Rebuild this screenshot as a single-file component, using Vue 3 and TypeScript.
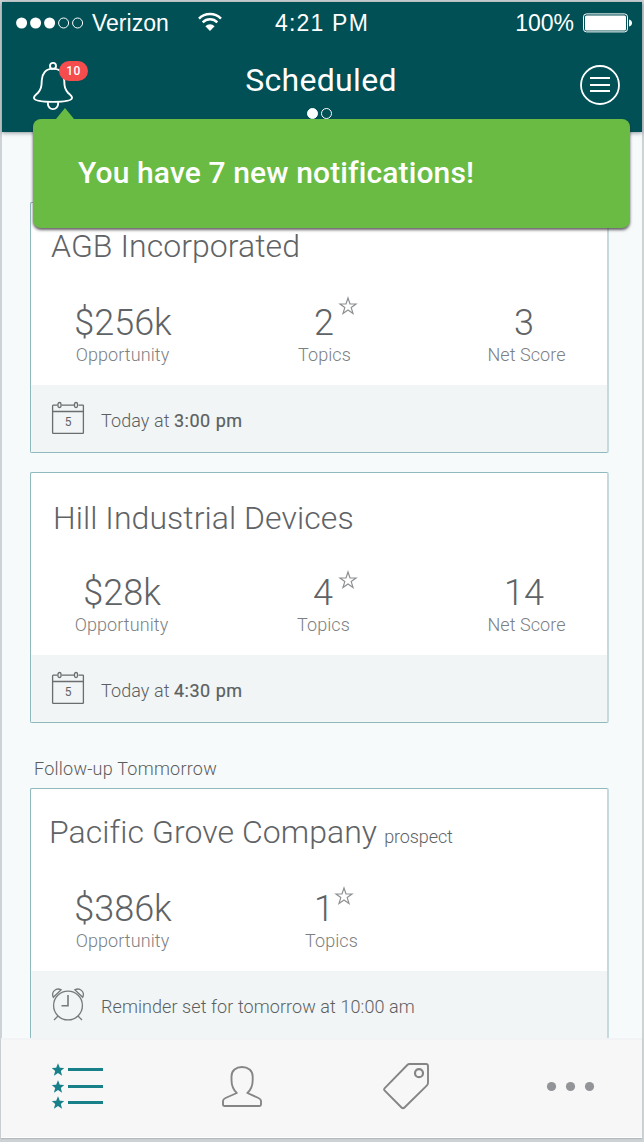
<script setup lang="ts">
import { ref } from 'vue'

interface Stat {
  key: string
  value: string
  label: string
  star?: boolean
}

interface Account {
  id: string
  name: string
  tag?: string
  stats: Stat[]
  icon: 'calendar' | 'alarm'
  when: string
  time?: string
}

const notificationCount = ref(10)

const today: Account[] = [
  {
    id: 'agb',
    name: 'AGB Incorporated',
    stats: [
      { key: 'opp', value: '$256k', label: 'Opportunity' },
      { key: 'topics', value: '2', label: 'Topics', star: true },
      { key: 'score', value: '3', label: 'Net Score' },
    ],
    icon: 'calendar',
    when: 'Today at',
    time: '3:00 pm',
  },
  {
    id: 'hill',
    name: 'Hill Industrial Devices',
    stats: [
      { key: 'opp', value: '$28k', label: 'Opportunity' },
      { key: 'topics', value: '4', label: 'Topics', star: true },
      { key: 'score', value: '14', label: 'Net Score' },
    ],
    icon: 'calendar',
    when: 'Today at',
    time: '4:30 pm',
  },
]

const tomorrow: Account[] = [
  {
    id: 'pacific',
    name: 'Pacific Grove Company',
    tag: 'prospect',
    stats: [
      { key: 'opp', value: '$386k', label: 'Opportunity' },
      { key: 'topics', value: '1', label: 'Topics', star: true },
    ],
    icon: 'alarm',
    when: 'Reminder set for tomorrow at 10:00 am',
  },
]

const sections = [
  { id: 'today', title: '', accounts: today },
  { id: 'tomorrow', title: 'Follow-up Tommorrow', accounts: tomorrow },
]
</script>

<template>
  <div class="frame">
    <div class="screen">
      <header class="header">
        <div class="status">
          <div class="carrier">
            <svg class="signal" width="68" height="12" viewBox="0 0 68 12">
              <circle cx="5.6" cy="6" r="5.5" fill="#fff" />
              <circle cx="19.6" cy="6" r="5.5" fill="#fff" />
              <circle cx="33.6" cy="6" r="5.5" fill="#fff" />
              <circle cx="47.6" cy="6" r="5" fill="none" stroke="#fff" />
              <circle cx="61.6" cy="6" r="5" fill="none" stroke="#fff" />
            </svg>
            <span class="network">Verizon</span>
            <svg class="wifi" width="24" height="18" viewBox="0 0 24 18">
              <path d="M1 5.6a15.6 15.6 0 0 1 22 0M4.7 9.4a10.3 10.3 0 0 1 14.6 0" fill="none" stroke="#fff" stroke-width="2.5" />
              <path d="M7.4 13.2a6.6 6.6 0 0 1 9.2 0L12 18z" fill="#fff" />
            </svg>
          </div>
          <span class="clock">4:21 PM</span>
          <div class="power">
            <span>100%</span>
            <svg width="49" height="20" viewBox="0 0 49 20">
              <rect x=".5" y=".9" width="44" height="18" rx="3" fill="none" stroke="#fff" />
              <rect x="2" y="2.4" width="41" height="15" rx="1.5" fill="#fff" />
              <path d="M46 6.4q3 .8 3 3.5t-3 3.5z" fill="#fff" />
            </svg>
          </div>
        </div>

        <div class="bar">
          <div class="bell">
            <svg width="40" height="48" viewBox="0 0 40 48" fill="none" stroke="#fff" stroke-width="1.9">
              <circle cx="20" cy="3.9" r="3" />
              <path d="M20 6.6C12.500 6.600 9 12 8.800 18C8.600 25 8 27.500 4.800 31C2.500 33.200 1 34 1 35.800C1 38.500 9 39.900 20 39.900S39 38.500 39 35.800C39 34 37.500 33.200 35.200 31C32 27.500 31.400 25 31.200 18C31 12 27.500 6.600 20 6.600Z" />
              <path d="M14.900 40.300V42A5.100 5.100 0 0 0 25.100 42V40.300" />
            </svg>
            <span class="count">{{ notificationCount }}</span>
          </div>
          <div class="heading">
            <h1>Scheduled</h1>
            <div class="pager"><i class="dot on"></i><i class="dot"></i></div>
          </div>
          <svg class="menu" width="40" height="40" viewBox="0 0 40 40" fill="none" stroke="#fff" stroke-width="1.8">
            <circle cx="20" cy="20" r="19" />
            <path d="M10 13H30M10 20H30M10 26H30" stroke-width="2" />
          </svg>
        </div>

        <div class="toast">You have 7 new notifications!</div>
      </header>

      <main class="content">
        <section v-for="s in sections" :key="s.id" class="section">
          <h2 v-if="s.title" class="section-title">{{ s.title }}</h2>
          <article v-for="a in s.accounts" :key="a.id" class="card" :class="a.id">
            <div class="body">
              <h3 class="name">{{ a.name }}<small v-if="a.tag">{{ a.tag }}</small></h3>
              <div class="stats">
                <div v-for="st in a.stats" :key="st.key" class="stat" :class="st.key">
                  <span class="value">{{ st.value }}</span>
                  <span class="label">{{ st.label }}</span>
                  <svg v-if="st.star" class="star" width="20" height="20" viewBox="0 0 20 20">
                    <path d="M10 2L12 8H18L13.200 11.600L15 17.500L10 13.900L5 17.500L6.800 11.600L2 8H8Z" fill="none" stroke="#8d9092" stroke-width="1.200" />
                  </svg>
                </div>
              </div>
            </div>
            <footer class="foot">
              <svg v-if="a.icon === 'calendar'" width="34" height="34" viewBox="0 0 34 34" fill="none" stroke="#6b6d6e" stroke-width="1.3">
                <path d="M6.500 4.200H2.200Q1.600 4.200 1.600 4.800V31.800Q1.600 32.400 2.200 32.400H31.800Q32.400 32.400 32.400 31.800V4.800Q32.400 4.200 31.800 4.200H27.500M10.500 4.200H23.500M1.600 10.500H32.400" />
                <rect x="7" y="1.500" width="3" height="5" rx="1.500" />
                <rect x="23.500" y="1.500" width="3" height="5" rx="1.500" />
                <text x="17" y="25" text-anchor="middle" class="day">5</text>
              </svg>
              <svg v-else width="34" height="34" viewBox="0 0 34 34" fill="none" stroke="#77797a" stroke-width="1.3">
                <circle cx="17" cy="18.500" r="14.400" />
                <path d="M17 8V18.700H10.500" stroke-width="1.600" />
                <path d="M7 29L3 33M27 29L31 33" />
                <path d="M2.300 10.300C-.2 5 5 .3 10.200 2.800ZM31.700 10.300C34.200 5 29 .3 23.800 2.800Z" />
              </svg>
              <span class="when">{{ a.when }} <b v-if="a.time">{{ a.time }}</b></span>
            </footer>
          </article>
        </section>
      </main>

      <nav class="tabs">
        <svg width="52" height="48" viewBox="0 0 52 48" fill="#178088">
          <g v-for="y in [8, 25, 41]" :key="y">
            <path :transform="`translate(7 ${y})`" d="M0 -6.800L1.800 -2.300L6.200 -2L2.800 .9L4.100 5.700L0 3L-4.100 5.700L-2.800 .9L-6.200 -2L-1.800 -2.300Z" />
            <rect x="17" :y="y - 2" width="35" height="3" />
          </g>
        </svg>
        <svg width="42" height="48" viewBox="0 0 42 48" fill="none" stroke="#858585" stroke-width="1.900" stroke-linejoin="round">
          <path d="M14.800 31C11 27.500 9.500 23.500 9.500 18V14.500C9.500 8.500 14 5 20 5S30.700 8.500 30.700 14.500V18C30.700 23.500 29.200 27.500 25.400 31L36.500 36Q39 37.200 39 39V42.500Q39 44 37.500 44H2.500Q1 44 1 42.500V39Q1 37.200 3.500 36Z" />
        </svg>
        <svg class="tag" width="46" height="48" viewBox="0 0 46 48" fill="none" stroke="#858585" stroke-width="1.900" stroke-linejoin="round">
          <path d="M26.500 2H43Q45 2 45 4V20.800Q45 22.300 44 23.300L21.500 45.500Q20 47 18.500 45.500L1.500 28.300Q.5 27.300 1.500 26.300L24.300 3Q25.300 2 26.500 2Z" />
          <circle cx="36" cy="11.200" r="4" stroke-width="2.200" />
        </svg>
        <svg class="more" width="46" height="48" viewBox="0 0 46 48" fill="#929497">
          <circle v-for="x in [3.500, 22.500, 41.500]" :key="x" :cx="x" cy="24.500" r="4.600" />
        </svg>
      </nav>
    </div>
  </div>
</template>

<style>
body {
  background: #cdd3d5;
}
</style>

<style scoped>
.frame {
  box-sizing: border-box;
  width: 644px;
  height: 1142px;
  padding: 2px;
  background: #cdd3d5;
  overflow: hidden;
  font-family: Roboto, 'Liberation Sans', sans-serif;
  color: #5f6366;
}
.screen {
  display: flex;
  flex-direction: column;
  width: 640px;
  height: 1136px;
  background: #f6fafb;
}
svg {
  display: block;
  flex: none;
  overflow: visible;
}
h1, h2, h3 {
  margin: 0;
  font-weight: 300;
}
.header {
  position: relative;
  z-index: 2;
  flex: none;
  height: 130px;
  background: #005056;
  color: #fff;
  box-shadow: 0 1px 4px rgba(40, 50, 55, .5);
}
.status {
  display: grid;
  grid-template-columns: 1fr auto 1fr;
  align-items: center;
  height: 42px;
  padding: 0 10px 0 14px;
  font-family: 'Liberation Sans', sans-serif;
  font-size: 23px;
}
.carrier, .power {
  display: flex;
  align-items: center;
}
.network {
  margin: 1px 0 0 8px;
}
.wifi {
  margin-left: 29px;
  margin-top: -2px;
}
.clock {
  margin-right: 4px;
  letter-spacing: 1.2px;
}
.power {
  justify-content: flex-end;
  gap: 9px;
}
.bar {
  display: flex;
  justify-content: space-between;
  align-items: flex-start;
  padding: 16px 22px 0 31px;
}
.bell {
  position: relative;
  width: 40px;
}
.bell svg {
  margin-top: 2px;
}
.count {
  position: absolute;
  left: 26px;
  top: 1px;
  width: 29px;
  height: 20px;
  border-radius: 10px;
  background: #f54d4e;
  font-size: 12px;
  font-weight: 500;
  line-height: 21px;
  letter-spacing: .4px;
  text-align: center;
}
.heading {
  display: flex;
  flex-direction: column;
  align-items: center;
  margin-left: -11px;
}
h1 {
  font-size: 32px;
  line-height: 40px;
  font-weight: 400;
  letter-spacing: .3px;
}
.pager {
  display: flex;
  gap: 3px;
  margin: 8px 3px 0 0;
}
.dot {
  box-sizing: border-box;
  width: 11px;
  height: 11px;
  border: 1px solid #fff;
  border-radius: 50%;
}
.dot.on {
  background: #fff;
}
.menu {
  margin-top: 5px;
}
.toast {
  position: absolute;
  left: 31px;
  top: 117px;
  box-sizing: border-box;
  width: 597px;
  height: 109px;
  padding-left: 45px;
  border-radius: 8px;
  background: #69bb43;
  box-shadow: 0 2px 3px rgba(50, 40, 50, .75);
  font-size: 30px;
  font-weight: 500;
  line-height: 107px;
  letter-spacing: .12px;
}
.toast::before {
  content: '';
  position: absolute;
  left: 23px;
  top: -11px;
  border: solid transparent;
  border-width: 0 9px 11px;
  border-bottom-color: #69bb43;
}
.content {
  flex: 1;
  min-height: 0;
  padding: 70px 33px 0 28px;
  overflow: hidden;
}
.section-title {
  height: 65px;
  padding-left: 4px;
  font-size: 18px;
  line-height: 91px;
  letter-spacing: .24px;
  color: #5c5c5c;
}
.card {
  box-sizing: border-box;
  height: 251px;
  border: 1px solid #8fb9bc;
  border-right: 2px solid #c5dadd;
  border-radius: 2px;
  background: #fff;
}
.card + .card {
  margin-top: 19px;
}
.body {
  box-sizing: border-box;
  height: 182px;
  padding-top: 24px;
}
.hill .body {
  padding-top: 26px;
}
.name {
  height: 38px;
  padding-left: 20px;
  font-size: 32px;
  line-height: 38px;
  letter-spacing: .06px;
  white-space: nowrap;
}
.hill .name {
  height: 36px;
  padding-left: 22px;
}
.pacific .name {
  padding-left: 18px;
}
.name small {
  margin-left: 7px;
  font-size: 18px;
  letter-spacing: -.1px;
}
.stats {
  display: flex;
  gap: 52px;
  padding: 38px 0 0 17px;
}
.stat {
  position: relative;
  display: flex;
  flex-direction: column;
  align-items: center;
  width: 150px;
}
.value {
  font-size: 36px;
  line-height: 40px;
  font-weight: 300;
}
.label {
  margin-top: 2px;
  padding-right: 1px;
  font-size: 18px;
  line-height: 20px;
  font-weight: 300;
  letter-spacing: .08px;
  color: #7c8083;
}
.hill .opp, .hill .topics {
  left: -1px;
}
.topics .value {
  padding-right: 2px;
}
.pacific .topics .label {
  padding-left: 14px;
}
.score .value {
  padding-right: 6px;
}
.star {
  position: absolute;
  left: 88px;
  top: -7px;
}
.hill .star {
  left: 89px;
  top: -3px;
}
.pacific .star {
  left: 84px;
  top: -3px;
}
.foot {
  display: flex;
  align-items: center;
  height: 67px;
  padding-left: 20px;
  background: #f1f5f6;
}
.foot svg {
  margin-top: -2px;
}
.day {
  font-size: 12px;
  fill: #5f6366;
  stroke: none;
}
.when {
  margin: 4px 0 0 16px;
  font-size: 18px;
  font-weight: 300;
  letter-spacing: .08px;
  color: #5c5f61;
}
.when b {
  font-weight: 400;
  letter-spacing: .5px;
  -webkit-text-stroke: .2px currentColor;
}
.tabs {
  position: relative;
  z-index: 1;
  display: flex;
  box-sizing: border-box;
  flex: none;
  gap: 119px;
  height: 100px;
  margin-left: -1px;
  padding: 22px 0 0 50px;
  border-top: 2px solid #f1f3f4;
  border-bottom: 1px solid #fff;
  background: #f7f7f7;
  box-shadow: 0 1px 1px #b5babc;
}
</style>
